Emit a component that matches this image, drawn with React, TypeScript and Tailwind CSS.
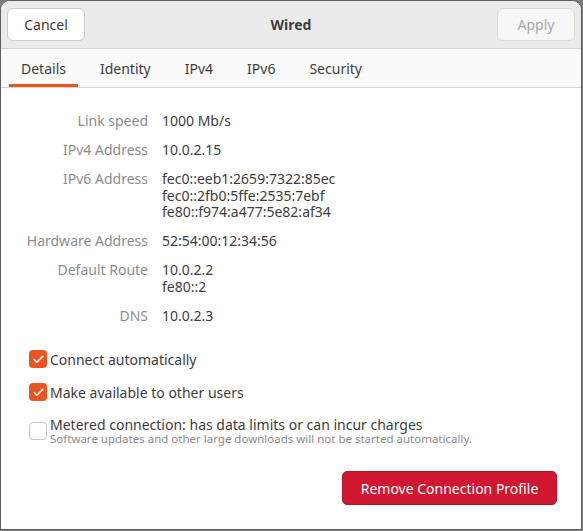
import { Check } from "lucide-react";

const rows: { label: string; values: string[] }[] = [
  { label: "Link speed", values: ["1000 Mb/s"] },
  { label: "IPv4 Address", values: ["10.0.2.15"] },
  {
    label: "IPv6 Address",
    values: ["fec0::eeb1:2659:7322:85ec", "fec0::2fb0:5ffe:2535:7ebf", "fe80::f974:a477:5e82:af34"],
  },
  { label: "Hardware Address", values: ["52:54:00:12:34:56"] },
  { label: "Default Route", values: ["10.0.2.2", "fe80::2"] },
  { label: "DNS", values: ["10.0.2.3"] },
];

const tabs = ["Details", "Identity", "IPv4", "IPv6", "Security"];

function CheckBox({ checked }: { checked: boolean }) {
  return checked ? (
    <div className="w-[18px] h-[18px] rounded-[4px] bg-[#e95420] flex items-center justify-center shrink-0">
      <Check size={13} strokeWidth={3} color="#ffffff" />
    </div>
  ) : (
    <div className="w-[18px] h-[18px] rounded-[4px] border border-[#c8c3bf] bg-white shrink-0" />
  );
}

export default function App() {
  return (
    <div
      className="w-[583px] h-[531px] bg-[#7d7d7d] text-[14px] text-[#3d3d3d]"
      style={{ fontFamily: '"Noto Sans", "DejaVu Sans", sans-serif' }}
    >
      <div className="w-[582px] h-[530px] rounded-t-[10px] border border-[#5e5e5e] bg-white overflow-hidden flex flex-col">
        {/* Header bar */}
        <div className="h-[48px] bg-[#ebebeb] border-b border-[#d5d0cc] flex items-center justify-between px-[6px] shrink-0">
          <button className="h-[33px] w-[78px] rounded-[6px] border border-[#cfcac6] bg-white text-[14px] text-[#3d3d3d]">
            Cancel
          </button>
          <div className="font-bold text-[14px] text-[#3d3d3d]">Wired</div>
          <button className="h-[33px] w-[78px] rounded-[6px] border border-[#ddd8d4] bg-[#f7f7f7] text-[14px] text-[#a9a9a9]">
            Apply
          </button>
        </div>

        {/* Tabs */}
        <div className="h-[39px] bg-[#fafafa] border-b border-[#d8d4d0] flex items-stretch gap-[10px] pl-[8px] shrink-0">
          {tabs.map((t, i) => (
            <div
              key={t}
              className={
                i === 0
                  ? "px-[12px] flex items-center border-b-[3px] border-[#e95420] pt-[3px] text-[#3d3d3d]"
                  : "px-[12px] flex items-center border-b-[3px] border-transparent pt-[3px] text-[#3d3d3d]"
              }
            >
              {t}
            </div>
          ))}
        </div>

        {/* Details */}
        <div className="flex-1 flex flex-col">
          <div className="grid grid-cols-[147px_1fr] gap-x-[14px] gap-y-[12.5px] pt-[25px] leading-[16.5px]">
            {rows.map((r) => (
              <div key={r.label} className="contents">
                <div className="text-right text-[#8d8d8d]">{r.label}</div>
                <div className="flex flex-col">
                  {r.values.map((v) => (
                    <span key={v}>{v}</span>
                  ))}
                </div>
              </div>
            ))}
          </div>

          <div className="flex flex-col pl-[28px] mt-[26px] gap-[15px]">
            <div className="flex items-center gap-[3px] h-[18px]">
              <CheckBox checked />
              <span>Connect automatically</span>
            </div>
            <div className="flex items-center gap-[3px] h-[18px]">
              <CheckBox checked />
              <span>Make available to other users</span>
            </div>
            <div className="flex items-center gap-[3px]">
              <CheckBox checked={false} />
              <div className="flex flex-col leading-[15px] pt-[1px]">
                <span>Metered connection: has data limits or can incur charges</span>
                <span className="text-[11.5px] leading-[13px] text-[#8d8d8d]">
                  Software updates and other large downloads will not be started automatically.
                </span>
              </div>
            </div>
          </div>

          <div className="flex justify-end pr-[24px] mt-[26px]">
            <button className="h-[34px] w-[215px] rounded-[5px] bg-[#d0172f] border border-[#b5142a] text-white text-[14px]">
              Remove Connection Profile
            </button>
          </div>
        </div>
      </div>
    </div>
  );
}
